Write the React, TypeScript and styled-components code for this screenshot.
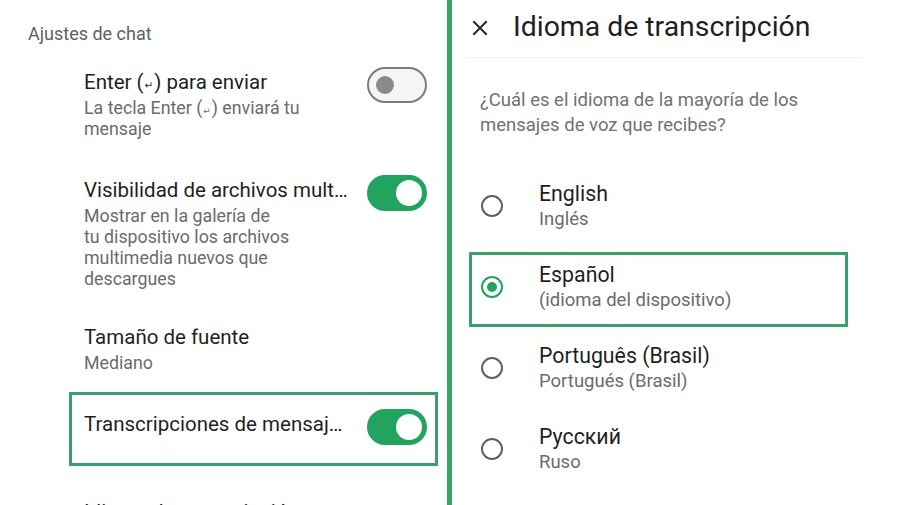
import React from "react";
import styled, { createGlobalStyle } from "styled-components";

const Global = createGlobalStyle`
  html, body { margin: 0; padding: 0; background: #ffffff; }
  body { width: 900px; height: 505px; overflow: hidden; font-family: Roboto, "Noto Sans", "Liberation Sans", sans-serif; }
  #root { height: 505px; }
`;

const GREEN = "#22a35e";
const MARK = "#3b9f6b";

const Page = styled.div`
  display: grid;
  grid-template-columns: 447px 5px 1fr;
  height: 505px;
  overflow: hidden;
  background: #fff;
`;

const Divider = styled.div`
  background: #37a468;
`;

const LeftPanel = styled.div`
  display: flex;
  flex-direction: column;
  padding: 0 9px 0 0;
  overflow: hidden;
  & > * { flex: none; }
`;

const SectionHeader = styled.div`
  padding: 24px 0 0 28px;
  height: 26px;
  font-size: 18px;
  line-height: 20px;
  color: #5f6163;
`;

const SettingRow = styled.div<{ $marked?: boolean; $extraTop?: number }>`
  display: flex;
  align-items: flex-start;
  margin-left: 69px;
  margin-top: ${(p) => p.$extraTop ?? 0}px;
  padding: 16px 8px 16px 12px;
  border: 3px solid ${(p) => (p.$marked ? MARK : "transparent")};
`;

const TextCol = styled.div`
  flex: 1;
  min-width: 0;
`;

const Title = styled.div`
  font-size: 20.5px;
  line-height: 26px;
  color: #1f1f1f;
  white-space: nowrap;
`;

const Sub = styled.div`
  margin-top: 2px;
  font-size: 17.8px;
  line-height: 21px;
  color: #6a6b6d;
  white-space: nowrap;
`;

const FaintSub = styled.div`
  height: 10px;
  display: flex;
  gap: 38px;
  align-items: center;
  padding-left: 36px;
  color: #d9d9d9;
  font-size: 8px;
  line-height: 10px;
`;

const Key = styled.span`
  font-family: "DejaVu Sans", sans-serif;
  font-size: 0.5em;
  line-height: 0;
  margin: 0 1px;
`;

const Track = styled.div<{ $on: boolean }>`
  position: relative;
  flex: none;
  width: 60px;
  height: 36px;
  margin-top: -2px;
  margin-left: 14px;
  box-sizing: border-box;
  border-radius: 18px;
  border: 2px solid ${(p) => (p.$on ? GREEN : "#7b7c7e")};
  background: ${(p) => (p.$on ? GREEN : "#f5f5f5")};
`;

const Knob = styled.div<{ $on: boolean }>`
  position: absolute;
  top: 50%;
  transform: translateY(-50%);
  border-radius: 50%;
  ${(p) =>
    p.$on
      ? `width: 26px; height: 26px; right: 3px; background: #ffffff;`
      : `width: 18px; height: 18px; left: 7px; background: #898a8c;`}
`;

const RightPanel = styled.div`
  display: flex;
  flex-direction: column;
  overflow: hidden;
  & > * { flex: none; }
`;

const DialogHeader = styled.div`
  display: flex;
  align-items: center;
  height: 53px;
  margin: 0 37px 0 13px;
  border-bottom: 1px solid #f0f0f0;
  padding-bottom: 4px;
`;

const CloseBtn = styled.div`
  width: 16px;
  height: 16px;
  margin: 2px 25px 0 7px;
  display: flex;
`;

const DialogTitle = styled.div`
  font-size: 28.4px;
  line-height: 32px;
  color: #1f1f1f;
  white-space: nowrap;
`;

const Question = styled.div`
  padding: 30px 10px 0 28px;
  font-size: 18.5px;
  line-height: 25px;
  color: #707173;
  white-space: nowrap;
`;

const OptionList = styled.div`
  display: flex;
  flex-direction: column;
  gap: 6px;
  margin: 33px 0 0 17px;
  width: 379px;
`;

const Option = styled.div<{ $marked?: boolean }>`
  display: flex;
  align-items: center;
  height: 75px;
  box-sizing: border-box;
  padding: 0 0 5px 9px;
  border: 3px solid ${(p) => (p.$marked ? MARK : "transparent")};
`;

const Radio = styled.div<{ $on: boolean }>`
  flex: none;
  width: 22px;
  height: 22px;
  box-sizing: border-box;
  border-radius: 50%;
  border: 2px solid ${(p) => (p.$on ? GREEN : "#5f6062")};
  display: flex;
  align-items: center;
  justify-content: center;
  margin-right: 36px;
  &::after {
    content: "";
    display: ${(p) => (p.$on ? "block" : "none")};
    width: 10px;
    height: 10px;
    border-radius: 50%;
    background: ${GREEN};
  }
`;

const OptTitle = styled.div`
  font-size: 21.3px;
  line-height: 26px;
  color: #1f1f1f;
  white-space: nowrap;
`;

const OptSub = styled.div`
  font-size: 18.5px;
  line-height: 24px;
  color: #6a6b6d;
  white-space: nowrap;
`;

const Toggle = ({ on }: { on: boolean }) => (
  <Track $on={on}>
    <Knob $on={on} />
  </Track>
);

const languages = [
  { name: "English", sub: "Inglés", on: false },
  { name: "Español", sub: "(idioma del dispositivo)", on: true },
  { name: "Português (Brasil)", sub: "Portugués (Brasil)", on: false },
  { name: "Русский", sub: "Ruso", on: false },
];

export default function App() {
  return (
    <>
      <Global />
      <Page>
        <LeftPanel>
          <SectionHeader>Ajustes de chat</SectionHeader>
          <SettingRow>
            <TextCol>
              <Title>
                Enter (<Key>↵</Key>) para enviar
              </Title>
              <Sub>
                La tecla Enter (<Key>↵</Key>) enviará tu
                <br />
                mensaje
              </Sub>
            </TextCol>
            <Toggle on={false} />
          </SettingRow>
          <SettingRow>
            <TextCol>
              <Title>Visibilidad de archivos mult…</Title>
              <Sub>
                Mostrar en la galería de
                <br />
                tu dispositivo los archivos
                <br />
                multimedia nuevos que
                <br />
                descargues
              </Sub>
            </TextCol>
            <Toggle on={true} />
          </SettingRow>
          <SettingRow $extraTop={-3}>
            <TextCol>
              <Title>Tamaño de fuente</Title>
              <Sub>Mediano</Sub>
            </TextCol>
          </SettingRow>
          <SettingRow $marked>
            <TextCol>
              <Title>Transcripciones de mensaj…</Title>
              <FaintSub>
                <span>·</span>
                <span>·</span>
                <span>·</span>
                <span>·</span>
                <span>·</span>
              </FaintSub>
            </TextCol>
            <Toggle on={true} />
          </SettingRow>
          <SettingRow $extraTop={14}>
            <TextCol>
              <Title>Idioma de transcripción</Title>
              <Sub>Español</Sub>
            </TextCol>
          </SettingRow>
        </LeftPanel>
        <Divider />
        <RightPanel>
          <DialogHeader>
            <CloseBtn>
              <svg width="16" height="16" viewBox="0 0 16 16">
                <path d="M2 2 L14 14 M14 2 L2 14" stroke="#2a2a2a" strokeWidth="2" strokeLinecap="square" />
              </svg>
            </CloseBtn>
            <DialogTitle>Idioma de transcripción</DialogTitle>
          </DialogHeader>
          <Question>
            ¿Cuál es el idioma de la mayoría de los
            <br />
            mensajes de voz que recibes?
          </Question>
          <OptionList>
            {languages.map((l) => (
              <Option key={l.name} $marked={l.on}>
                <Radio $on={l.on} />
                <div>
                  <OptTitle>{l.name}</OptTitle>
                  <OptSub>{l.sub}</OptSub>
                </div>
              </Option>
            ))}
          </OptionList>
        </RightPanel>
      </Page>
    </>
  );
}
